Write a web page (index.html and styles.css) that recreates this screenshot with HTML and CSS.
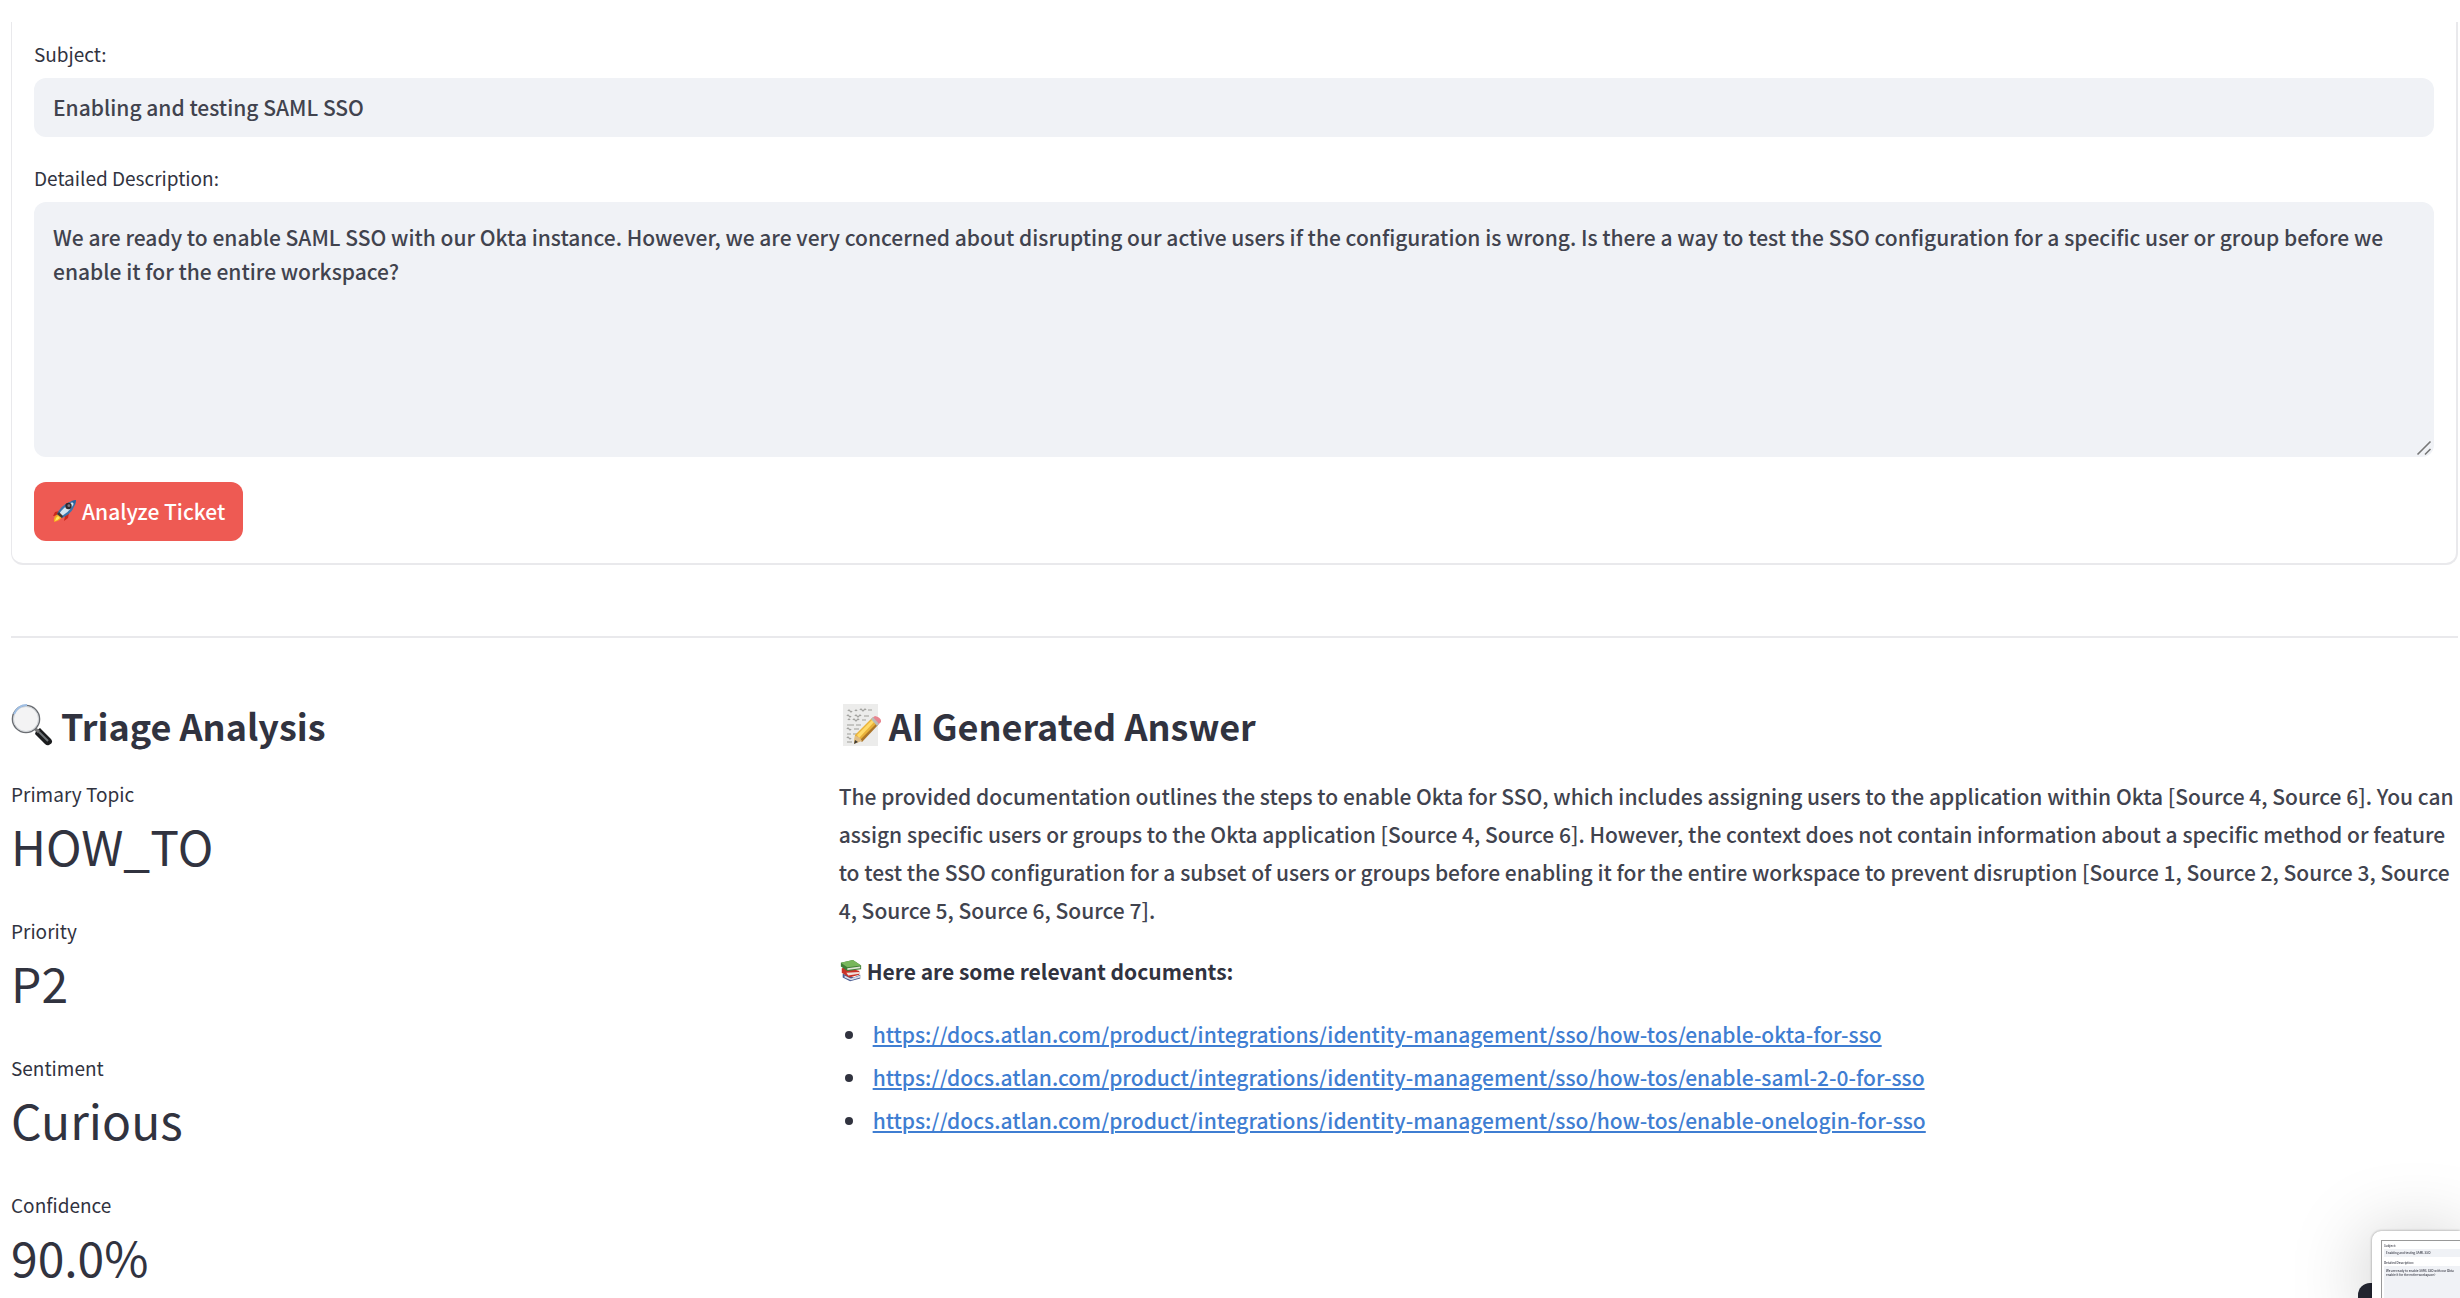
FILE: index.html
```html
<!DOCTYPE html>
<html lang="en">
<head>
<meta charset="utf-8">
<meta name="viewport" content="width=device-width, initial-scale=1">
<title>Ticket Triage</title>
<link rel="stylesheet" href="styles.css">
</head>
<body>
<main class="page">
  <form class="ticket-form">
    <div class="field">
      <label for="subject">Subject:</label>
      <input class="control" id="subject" type="text" value="Enabling and testing SAML SSO">
    </div>
    <div class="field">
      <label for="description">Detailed Description:</label>
      <div class="area">
        <textarea class="control" id="description">We are ready to enable SAML SSO with our Okta instance. However, we are very concerned about disrupting our active users if the configuration is wrong. Is there a way to test the SSO configuration for a specific user or group before we enable it for the entire workspace?</textarea>
        <svg class="grip" viewBox="0 0 16 16" aria-hidden="true"><path d="M1.500 14.500 14.500 1.500M9 14.500 14.500 9" fill="none" stroke="#777" stroke-width="1.600"/></svg>
      </div>
    </div>
    <button class="submit" type="button">
      <svg class="emoji" viewBox="0 0 24 24" aria-hidden="true">
        <path d="M6 12 2 13 0 17 6 16zM12 17l-1 5 4-3 1-5z" fill="#c9281c"/>
        <path d="M5 15Q0 17 1 23 7 22 9 18z" fill="#f6a623"/>
        <path d="M5 17Q2 19 2 22 5 21 7 19z" fill="#ffe95a"/>
        <path d="M4 15Q9 4 23 1 22 13 9 19z" fill="#3a76ad"/>
        <path d="M6 15Q12 6 22 2 18 12 9 17z" fill="#d5e4ef"/>
        <path d="M18 2 23 1 22 6z" fill="#27649f"/>
        <path d="M4 15 9 19 10 17 6 13z" fill="#43332f"/>
        <circle cx="15.500" cy="7" r="3.200" fill="#30282d"/>
        <circle cx="15.800" cy="6.700" r="1.400" fill="#817782"/>
      </svg>
      <span>Analyze Ticket</span>
    </button>
  </form>

  <hr class="divider">

  <div class="results">
    <section class="triage">
      <h2>
        <svg class="emoji" viewBox="0 0 42 42" aria-hidden="true">
          <path d="M25 27 29 24 40 35Q43 39 38 41 36 42 34 40L24 30z" fill="#1b1c1e"/>
          <path d="M28 28 37 37" stroke="#71767a" stroke-width="2"/>
          <path d="M22 23 28 28" stroke="#777" stroke-width="3"/>
          <circle cx="15" cy="15" r="13.500" fill="#f3f3f4" stroke="#6b6e73" stroke-width="1.600"/>
          <circle cx="15" cy="15" r="12.500" fill="none" stroke="#cfd3d7"/>
          <path d="M3 10Q7 1 16 1" fill="none" stroke="#9fbfe5" stroke-width="2"/>
        </svg>
        <span>Triage Analysis</span>
      </h2>
      <dl class="metrics">
        <div class="metric"><dt>Primary Topic</dt><dd>HOW_TO</dd></div>
        <div class="metric"><dt>Priority</dt><dd>P2</dd></div>
        <div class="metric"><dt>Sentiment</dt><dd>Curious</dd></div>
        <div class="metric"><dt>Confidence</dt><dd>90.0%</dd></div>
      </dl>
    </section>

    <section class="answer">
      <h2>
        <svg class="emoji" viewBox="0 0 42 42" aria-hidden="true">
          <path d="M4 0H39V42H4z" fill="#ececeb"/>
          <path d="M9 7q1-2 2 0t2 0m3 0q1-2 2 0m3-1q1-2 2 0t2 0 2 0m2 0h4M8 12q1-2 2 0t2 0m4 0q1-2 2 0t2 0 2 0m3 0h5M9 16q1-2 2 0m3 0q1-2 2 0t2 0 2 0m3 0h4M8 21h7m2 0h5M8 25q1-2 2 0t2 0m3 0h5M8 30h4m2 0h4M8 34q1-2 2 0t2 0M8 38h5" fill="none" stroke="#9d9d9a" stroke-width="1.200"/>
          <path d="M15 39 16 31 33 14 39 19 23 36z" fill="#e9b23a"/>
          <path d="M18 31 34 15 36 17 20 34z" fill="#ffda69"/>
          <path d="M21 36 37 20 39 21 23 38z" fill="#ad7628"/>
          <path d="M33 14 36 12Q43 14 42 18L39 21z" fill="#e8848e"/>
          <path d="M32 15 34 13 40 20 38 22z" fill="#b9bbb9"/>
          <path d="M15 40 16 32Q20 32 23 37z" fill="#dfbd86"/>
          <path d="M15 40 16 36 19 38z" fill="#3c3934"/>
        </svg>
        <span>AI Generated Answer</span>
      </h2>
      <p class="answer-text">The provided documentation outlines the steps to enable Okta for SSO, which includes assigning users to the application within Okta [Source 4, Source 6]. You can assign specific users or groups to the Okta application [Source 4, Source 6]. However, the context does not contain information about a specific method or feature to test the SSO configuration for a subset of users or groups before enabling it for the entire workspace to prevent disruption [Source 1, Source 2, Source 3, Source 4, Source 5, Source 6, Source 7].</p>
      <p class="docs-title">
        <svg class="emoji" viewBox="-1 0 26 26" aria-hidden="true">
          <path d="M3 16 15 20 22 17V21L11 24 3 20z" fill="#485a91"/>
          <path d="M5 18 12 21 22 18V20L12 23 5 20z" fill="#d9dce7"/>
          <path d="M2 10 8 9 21 13V17L10 20 2 15z" fill="#c83228"/>
          <path d="M7 15 21 14V16L9 18z" fill="#f0dedb"/>
          <path d="M1 4 14 1 23 7V11L8 13 1 8z" fill="#3f7e36"/>
          <path d="M8 10 22 8V10L8 12z" fill="#e0e5d6"/>
          <path d="M1 4 14 1 23 7 8 9z" fill="#78b65b"/>
        </svg>
        <strong>Here are some relevant documents:</strong>
      </p>
      <ul class="docs">
        <li><a href="https://docs.atlan.com/product/integrations/identity-management/sso/how-tos/enable-okta-for-sso">https://docs.atlan.com/product/integrations/identity-management/sso/how-tos/enable-okta-for-sso</a></li>
        <li><a href="https://docs.atlan.com/product/integrations/identity-management/sso/how-tos/enable-saml-2-0-for-sso">https://docs.atlan.com/product/integrations/identity-management/sso/how-tos/enable-saml-2-0-for-sso</a></li>
        <li><a href="https://docs.atlan.com/product/integrations/identity-management/sso/how-tos/enable-onelogin-for-sso">https://docs.atlan.com/product/integrations/identity-management/sso/how-tos/enable-onelogin-for-sso</a></li>
      </ul>
    </section>
  </div>
</main>

<aside class="preview" aria-label="Capture preview">
  <div class="preview-handle"></div>
  <div class="preview-card">
    <div class="preview-shot">
      <span>Subject:</span>
      <div class="preview-box">Enabling and testing SAML SSO</div>
      <span>Detailed Description:</span>
      <div class="preview-box preview-text">We are ready to enable SAML SSO with our Okta<br>enable it for the entire workspace?</div>
    </div>
  </div>
</aside>
</body>
</html>
```
FILE: styles.css
```css
* { box-sizing: border-box; }

body {
  margin: 0;
  background: #fff;
  color: #31333f;
  font-family: "Noto Sans CJK SC", "Open Sans", sans-serif;
  font-size: 21px;
  font-weight: 500;
  line-height: 38px;
  overflow: hidden;
}

.page { padding: 22px 2px 0 11px; }

.ticket-form {
  display: flex;
  flex-direction: column;
  align-items: stretch;
  gap: 25px;
  padding: 16px 22px 22px;
  border: 2px solid #e9e9ec;
  border-width: 0 2px 2px 1px;
  border-radius: 0 0 12px 12px;
}

.field { display: flex; flex-direction: column; gap: 8px; }

label, dt { font-size: 19px; font-weight: 400; line-height: 32px; }

.control {
  display: block;
  width: 100%;
  border: 0;
  border-radius: 12px;
  background: #f0f2f6;
  color: #41434e;
  font: inherit;
  outline: 0;
}

input.control { height: 59px; padding: 0 19px 2px; }

.area { position: relative; }

textarea.control {
  height: 255px;
  padding: 18px 24px 17px 19px;
  line-height: 34px;
  resize: none;
}

.grip { position: absolute; right: 2px; bottom: 1px; width: 16px; height: 16px; }

.submit {
  display: flex;
  align-items: center;
  align-self: flex-start;
  gap: 5px;
  height: 59px;
  padding: 0 18px 2px 19px;
  border: 0;
  border-radius: 12px;
  background: #ee5a53;
  color: #fff;
  font: inherit;
}

.emoji { flex: none; width: 24px; height: 24px; }

.divider { height: 2px; margin: 71px 0 0; border: 0; background: #e9e9ec; }

.results {
  display: grid;
  grid-template-columns: minmax(0, 1fr) minmax(0, 2fr);
  gap: 18px;
  padding-top: 62px;
}

h2 {
  display: flex;
  align-items: center;
  gap: 8px;
  margin: 0 0 18px;
  font-size: 36px;
  line-height: 50px;
  font-weight: 700;
}

h2 .emoji { width: 42px; height: 42px; }

.metrics { display: flex; flex-direction: column; gap: 36px; margin: 0; padding-top: 10px; }
.metric { height: 101px; }
dd { margin: 0; font-size: 48px; font-weight: 400; line-height: 71px; }

p { margin: 0; }
.answer p { margin-bottom: 23px; }
.answer .answer-text { padding-top: 9px; color: #41434e; }
.docs-title { display: flex; align-items: center; gap: 4px; }

.docs { margin: 0; padding: 0 0 0 6px; list-style: none; }
.docs li { display: flex; align-items: center; gap: 20px; line-height: 43px; }
.docs li::before {
  content: "";
  width: 8px;
  height: 8px;
  border-radius: 50%;
  background: #31333f;
}
.docs a { color: #3f7ed2; text-decoration: underline; }

.preview { position: fixed; right: 0; bottom: 0; width: 88px; height: 67px; }

.preview-card {
  position: absolute;
  inset: 0;
  padding: 9px 0 0 9px;
  border-radius: 9px 0 0 0;
  background: #fff;
  box-shadow: 0 0 3px rgba(0, 0, 0, .4), 0 12px 80px rgba(0, 0, 0, .28);
}

.preview-handle {
  position: absolute;
  left: -14px;
  top: 52px;
  width: 28px;
  height: 28px;
  border-radius: 12px;
  background: #252733;
}

.preview-shot {
  height: 100%;
  padding: 3px 0 0 2px;
  border: 1px solid #999;
  border-width: 1px 0 0 1px;
  overflow: hidden;
  font-size: 3px;
  line-height: 4px;
  white-space: nowrap;
}

.preview-shot span { display: block; }
.preview-box { height: 8px; margin: 1px 0 4px; padding: 2px; background: #f0f2f6; }
.preview-text { height: 40px; padding-top: 3px; }
```
